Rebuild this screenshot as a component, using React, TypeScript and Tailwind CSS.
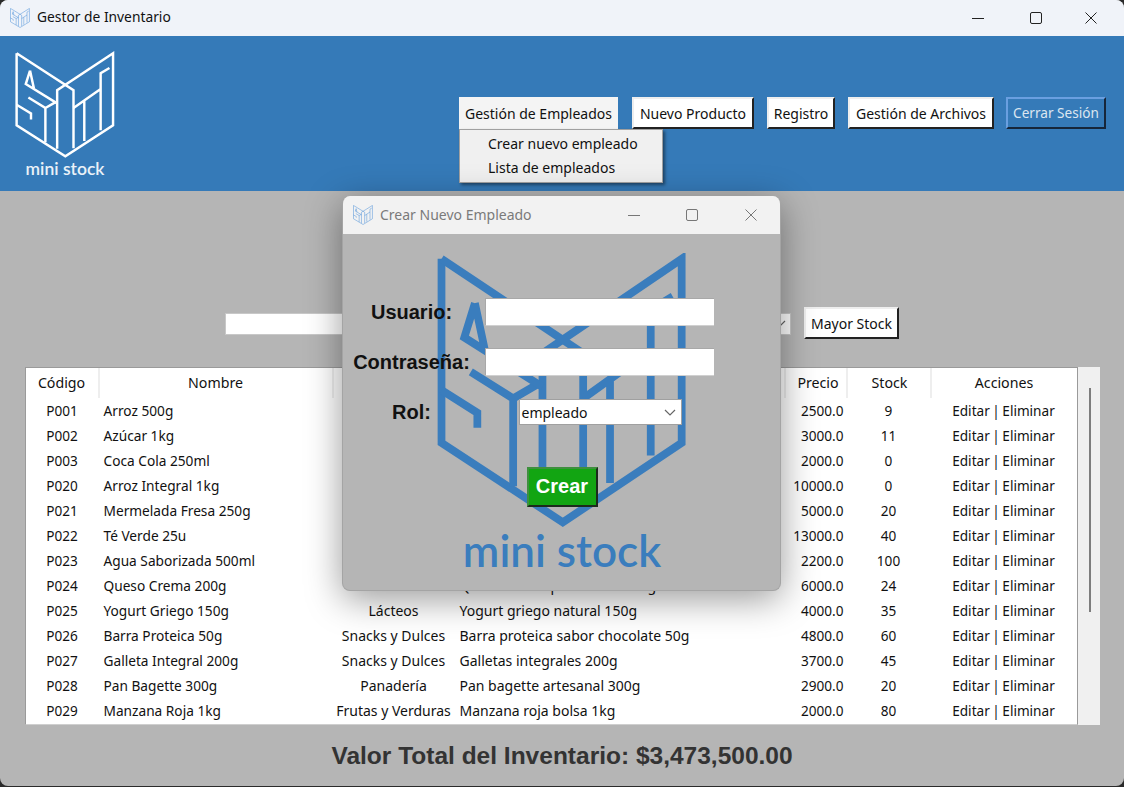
import React from "react";

const rows: string[][] = [
  ["P001", "Arroz 500g", "Granos", "Arroz blanco 500g", "2500.0", "9"],
  ["P002", "Azúcar 1kg", "Abarrotes", "Azúcar refinada 1kg", "3000.0", "11"],
  ["P003", "Coca Cola 250ml", "Bebidas", "Gaseosa 250ml", "2000.0", "0"],
  ["P020", "Arroz Integral 1kg", "Granos", "Arroz integral 1kg", "10000.0", "0"],
  ["P021", "Mermelada Fresa 250g", "Abarrotes", "Mermelada de fresa 250g", "5000.0", "20"],
  ["P022", "Té Verde 25u", "Bebidas", "Té verde 25 unidades", "13000.0", "40"],
  ["P023", "Agua Saborizada 500ml", "Bebidas", "Agua saborizada 500ml", "2200.0", "100"],
  ["P024", "Queso Crema 200g", "Lácteos", "Queso crema para untar 200g", "6000.0", "24"],
  ["P025", "Yogurt Griego 150g", "Lácteos", "Yogurt griego natural 150g", "4000.0", "35"],
  ["P026", "Barra Proteica 50g", "Snacks y Dulces", "Barra proteica sabor chocolate 50g", "4800.0", "60"],
  ["P027", "Galleta Integral 200g", "Snacks y Dulces", "Galletas integrales 200g", "3700.0", "45"],
  ["P028", "Pan Bagette 300g", "Panadería", "Pan bagette artesanal 300g", "2900.0", "20"],
  ["P029", "Manzana Roja 1kg", "Frutas y Verduras", "Manzana roja bolsa 1kg", "2000.0", "80"],
];

function Logo({ color, sw, className }: { color: string; sw: number; className: string }) {
  return (
    <svg viewBox="40 148 312 330" preserveAspectRatio="none" className={className} fill="none" stroke={color} strokeWidth={sw} strokeLinejoin="miter">
      <path d="M48 155 V375 L197 470 L343 375 V155 L172 268 V447" />
      <path d="M48 155 L222 268 V445" />
      <path d="M222 322 L305 264 M305 390 V216 L332 200 M255 300 V423" />
      <path d="M84 290 L136 322 V427 M136 322 L166 305 M48 312 L92 339 V357" />
      <path d="M89 208 L76 249 L172 308 M89 208 L101 263" />
    </svg>
  );
}

function WinControls({ color, gapA, gapB, pad }: { color: string; gapA: string; gapB: string; pad: string }) {
  return (
    <div className={`flex items-center ${pad}`}>
      <svg width="12" height="12" viewBox="0 0 12 12" fill="none" stroke={color}><path d="M0 6.5H12" /></svg>
      <svg width="12" height="12" viewBox="0 0 12 12" fill="none" stroke={color} className={gapA}><rect x="0.5" y="0.5" width="11" height="11" rx="1.5" /></svg>
      <svg width="12" height="12" viewBox="0 0 12 12" fill="none" stroke={color} className={gapB}><path d="M0.5 0.5L11.5 11.5M11.5 0.5L0.5 11.5" /></svg>
    </div>
  );
}

function RaisedButton({ label, className }: { label: string; className: string }) {
  return (
    <div className={`h-[32px] flex items-center justify-center bg-white text-[#111] text-[14px] border-2 border-t-[#eeeeee] border-l-[#eeeeee] border-r-[#222222] border-b-[#222222] ${className}`}>
      {label}
    </div>
  );
}

function Chevron() {
  return (
    <svg width="12" height="7" viewBox="0 0 12 7" fill="none" stroke="#666" strokeWidth="1.2"><path d="M1 1L6 6L11 1" /></svg>
  );
}

const th = "h-[30px] p-0 pb-[1px] font-normal text-[14.2px] border-r-2 border-[#eeeeee] text-center";

export default function App() {
  return (
    <div className="w-[1124px] h-[787px] bg-[#2a2a2a] overflow-hidden relative" style={{ fontFamily: '"Noto Sans", sans-serif' }}>
      <div className="h-[786px] rounded-b-lg rounded-t-lg overflow-hidden flex flex-col bg-[#b5b5b5]">
        {/* Title bar */}
        <div className="h-9 shrink-0 bg-[#f0f3f9] flex items-center justify-between">
          <div className="flex items-center pl-[10px]">
            <Logo color="#4a90d9" sw={8} className="w-5 h-5" />
            <span className="ml-[7px] text-[13.8px] leading-5 -mt-[2px] text-[#111]">Gestor de Inventario</span>
          </div>
          <WinControls color="#222" gapA="ml-[46px]" gapB="ml-[43px]" pad="pr-[27px]" />
        </div>

        {/* Header */}
        <div className="h-[155px] shrink-0 bg-[#357ab8] flex items-start justify-between">
          <div className="ml-[14px] mt-[15px] w-[102px] flex flex-col items-center">
            <Logo color="#ffffff" sw={7.5} className="w-[102px] h-[108px]" />
            <span className="text-white/90 text-[17.5px] font-semibold leading-none mt-[1px] whitespace-nowrap" style={{ fontFamily: "Lato, sans-serif" }}>mini stock</span>
          </div>
          <div className="flex items-center mt-[61px] mr-[18px]">
            <div className="w-[159px] h-[32px] flex items-center justify-center bg-[#f4f4f4] text-[#111] text-[14px]">Gestión de Empleados</div>
            <RaisedButton label="Nuevo Producto" className="w-[122px] ml-[14px]" />
            <RaisedButton label="Registro" className="w-[68px] ml-[13px]" />
            <RaisedButton label="Gestión de Archivos" className="w-[146px] ml-[13px]" />
            <div className="w-[100px] h-[32px] ml-[12px] flex items-center justify-center bg-[#357ab8] text-[#dce6f0] text-[13.6px] border-2 border-t-[#6a9fe0] border-l-[#6a9fe0] border-r-[#16263a] border-b-[#16263a]">Cerrar Sesión</div>
          </div>
        </div>

        {/* Content */}
        <div className="flex-1 flex flex-col items-center">
          <div className="mt-[116px] flex items-center justify-center">
            <div className="w-[320px] h-[22px] mt-[1px] bg-white border border-[#c8c8c8]" />
            <div className="w-[235px] h-[22px] mt-[1px] ml-[11px] bg-white border border-[#c8c8c8] flex items-center justify-end pr-[4px]"><Chevron /></div>
            <RaisedButton label="Mayor Stock" className="w-[95px] ml-[13px]" />
          </div>

          <div className="mt-[28px] flex">
            <div className="w-[1053px] h-[358px] bg-white border border-[#9a9a9a] border-b-[#cfcfcf] overflow-hidden">
              <table className="table-fixed border-collapse w-[1051px] text-[13.6px] leading-5 text-[#111]">
                <colgroup>
                  <col className="w-[73px]" />
                  <col className="w-[234px]" />
                  <col className="w-[122px]" />
                  <col className="w-[330px]" />
                  <col className="w-[62px]" />
                  <col className="w-[84px]" />
                  <col className="w-[146px]" />
                </colgroup>
                <thead>
                  <tr>
                    <th className={th}>Código</th>
                    <th className={th}>Nombre</th>
                    <th className={th}>Categoría</th>
                    <th className={th}>Descripción</th>
                    <th className="h-[30px] p-0 pb-[1px] pl-[5px] font-normal text-[14.2px] border-r-2 border-[#eeeeee] text-center">Precio</th>
                    <th className="h-[30px] p-0 pb-[1px] pl-[2px] font-normal text-[14.2px] border-r-2 border-[#eeeeee] text-center">Stock</th>
                    <th className="h-[30px] p-0 pb-[1px] font-normal text-[14.2px] text-center">Acciones</th>
                  </tr>
                </thead>
                <tbody>
                  {rows.map((r) => (
                    <tr key={r[0]} className="h-[25px]">
                      <td className="p-0 text-center">{r[0]}</td>
                      <td className="p-0 pl-[5px] text-[13.7px] whitespace-nowrap">{r[1]}</td>
                      <td className="p-0 text-[14px] text-center whitespace-nowrap">{r[2]}</td>
                      <td className="p-0 pl-[5px] text-[14px] whitespace-nowrap">{r[3]}</td>
                      <td className="p-0 pr-[3px] text-right">{r[4]}</td>
                      <td className="p-0 text-center">{r[5]}</td>
                      <td className="p-0 text-center whitespace-nowrap [word-spacing:-1px]">Editar | Eliminar</td>
                    </tr>
                  ))}
                </tbody>
              </table>
            </div>
            <div className="w-[22px] h-[358px] bg-[#f0f0f0] flex justify-center pl-[2px] pt-[21px]">
              <div className="w-[2px] h-[224px] bg-[#7d7d7d]" />
            </div>
          </div>

          <div className="mt-[16px] text-[24.5px] leading-[30px] font-bold text-[#333333]" style={{ fontFamily: '"Liberation Sans", sans-serif' }}>
            Valor Total del Inventario: $3,473,500.00
          </div>
        </div>
      </div>

      {/* Dropdown menu */}
      <div className="absolute left-[459px] top-[129px] w-[204px] h-[54px] bg-[#f0f0f0] border border-[#a0a0a0] shadow-[2px_2px_3px_rgba(0,0,0,0.45)] pl-[28px] pt-[2px] text-[14px] text-[#111]">
        <div className="h-6 leading-6">Crear nuevo empleado</div>
        <div className="h-6 leading-6">Lista de empleados</div>
      </div>

      {/* Dialog */}
      <div className="absolute left-[342px] top-[196px] w-[439px] h-[395px] rounded-lg overflow-hidden bg-[#b5b5b5] border border-[#a4a4a4] border-t-0 shadow-[0_8px_36px_rgba(0,0,0,0.4)] flex flex-col">
        <div className="h-[38px] shrink-0 bg-[#f2f2f2] flex items-center justify-between">
          <div className="flex items-center pl-[10px]">
            <Logo color="#4a90d9" sw={8} className="w-5 h-5" />
            <span className="ml-[7px] text-[14px] leading-5 -mt-[1px] text-[#7a7a7a]">Crear Nuevo Empleado</span>
          </div>
          <WinControls color="#777" gapA="ml-[46px]" gapB="ml-[47px]" pad="pr-[23px]" />
        </div>
        <div className="relative flex-1">
          <div className="absolute left-[92px] top-[19px] flex flex-col items-center w-[254px]">
            <Logo color="#3a7dbd" sw={9.5} className="w-[254px] h-[276px]" />
            <span className="-mt-[4px] text-[#3a7dbd] text-[44px] leading-[50px] font-semibold whitespace-nowrap" style={{ fontFamily: "Lato, sans-serif" }}>mini stock</span>
          </div>
          <div className="relative grid grid-cols-[142px_229px] pt-[64px] font-bold text-[20px] text-[#111]" style={{ fontFamily: '"Liberation Sans", sans-serif' }}>
            <div className="h-[28px] pr-[5px] flex items-center justify-center">Usuario:</div>
            <div className="h-[28px] bg-white border border-[#a8a8a8] border-r-0 border-b-[#d0d0d0]" />
            <div className="h-[28px] mt-[22px] pr-[5px] flex items-center justify-center whitespace-nowrap">Contraseña:</div>
            <div className="h-[28px] mt-[22px] bg-white border border-[#a8a8a8] border-r-0 border-b-[#d0d0d0]" />
            <div className="h-[26px] mt-[23px] pr-[5px] flex items-center justify-center">Rol:</div>
            <div className="h-[26px] mt-[23px] pl-[1px] flex justify-center">
              <div className="w-[163px] bg-white border border-[#a0a0a0] flex items-center justify-between pl-[2px] pr-[5px] text-[14px] font-normal" style={{ fontFamily: '"Noto Sans", sans-serif' }}>
                <span>empleado</span>
                <Chevron />
              </div>
            </div>
          </div>
          <div className="relative flex justify-center mt-[42px] pl-[1px]">
            <div className="w-[71px] h-[40px] pb-[2px] flex items-center justify-center bg-[#12a512] text-white font-bold text-[20px] border-2 border-t-[#3f8f3f] border-l-[#3f8f3f] border-r-[#1c2a1c] border-b-[#1c2a1c]" style={{ fontFamily: '"Liberation Sans", sans-serif' }}>Crear</div>
          </div>
        </div>
      </div>
    </div>
  );
}
